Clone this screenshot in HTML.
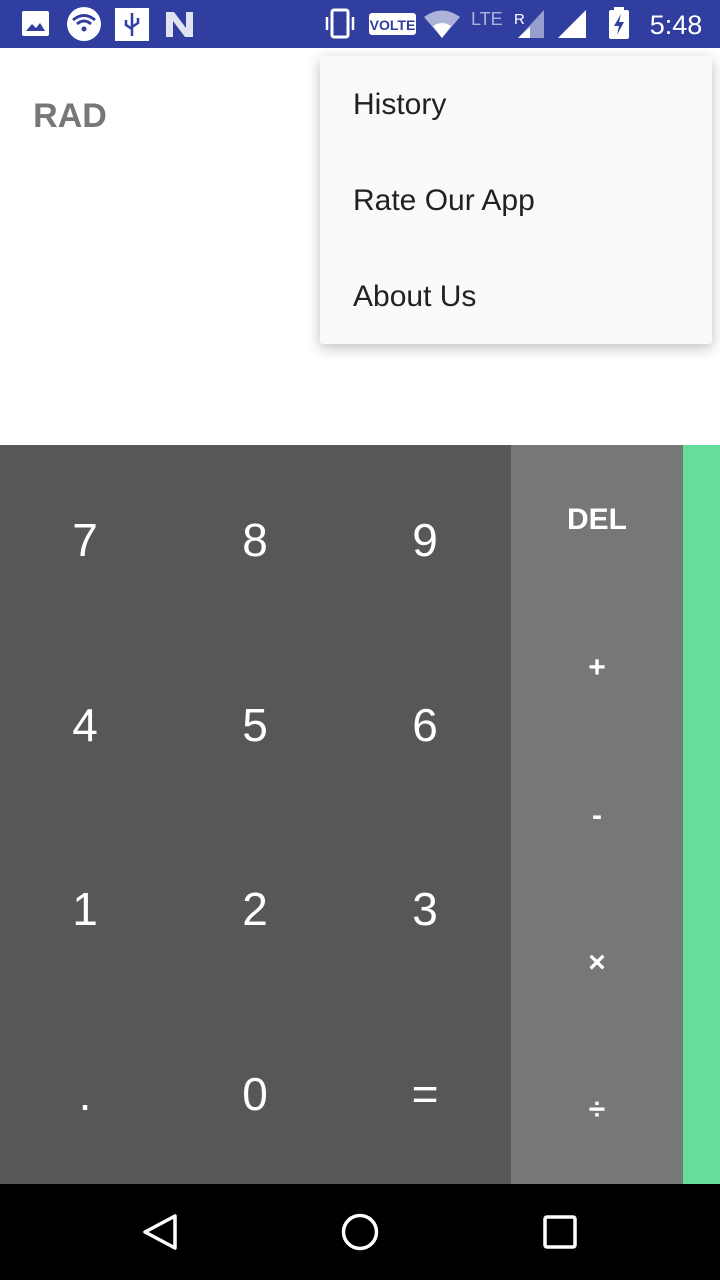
<!DOCTYPE html>
<html><head><meta charset="utf-8"><style>
*{margin:0;padding:0;box-sizing:border-box}
body{width:720px;height:1280px;position:relative;overflow:hidden;background:#fff;font-family:"Liberation Sans",sans-serif}
.sb{position:absolute;left:0;top:0;width:720px;height:48px;background:#303F9F;color:#fff}
.t{position:absolute;transform:translate(-50%,-50%);white-space:nowrap;line-height:1}
.menu{position:absolute;left:320px;top:56px;width:392px;height:288px;background:#FAFAFA;border-radius:3px;box-shadow:0 4px 14px rgba(0,0,0,.25)}
.mi{position:absolute;left:33px;font-size:30px;color:#212121;transform:translateY(-50%);line-height:1}
.pad{position:absolute;left:0;top:445px;width:511px;height:739px;background:#575757}
.ops{position:absolute;left:511px;top:445px;width:172px;height:739px;background:#777}
.gr{position:absolute;left:683px;top:445px;width:37px;height:739px;background:#66DD99}
.d{font-size:46px;color:#fff}
.o{font-size:30px;color:#fff;font-weight:bold}
.nav{position:absolute;left:0;top:1184px;width:720px;height:96px;background:#000}
</style></head><body>
<div class="sb">
<svg width="720" height="48" style="position:absolute;left:0;top:0">
<rect x="22" y="11" width="27" height="25" rx="2" fill="#fff"/><path d="M26 31 L32 24 L36 28 L40 23 L45 31Z" fill="#303F9F"/>
<circle cx="84" cy="24" r="17" fill="#fff"/><path d="M73 20 Q84 11 95 20 M77 24 Q84 18 91 24" stroke="#303F9F" stroke-width="3" fill="none"/><circle cx="84" cy="29" r="2.5" fill="#303F9F"/>
<rect x="115" y="8" width="34" height="33" fill="#fff"/><path d="M132 13 V36 M126 20 V25 L132 29 M138 18 V23 L132 27" stroke="#303F9F" stroke-width="2.5" fill="none"/>
<path d="M166 12 H174 L186 28 V12 H193 V37 H185 L173 21 V37 H166Z" fill="#fff" opacity=".85"/>
<rect x="332" y="10" width="16" height="27" rx="2" stroke="#fff" stroke-width="3" fill="none"/><path d="M327 17 V30 M353 17 V30" stroke="#fff" stroke-width="2.5"/>
<rect x="369" y="13" width="47" height="22" rx="3" fill="#fff"/><text x="392.5" y="30" font-size="14" font-weight="bold" fill="#303F9F" text-anchor="middle" font-family="Liberation Sans">VOLTE</text>
<path d="M424 17 Q442 4 460 17 L442 38Z" fill="#fff" opacity=".6"/><path d="M433 26 Q442 20 451 26 L442 38Z" fill="#fff"/>
<text x="471" y="25" font-size="18" fill="#fff" opacity=".6" font-family="Liberation Sans">LTE</text>
<text x="514" y="24" font-size="15" fill="#fff" font-family="Liberation Sans">R</text>
<path d="M544 10 V38 H518Z" fill="#fff" opacity=".5"/><path d="M530 27 V38 H518Z" fill="#fff"/>
<path d="M586 10 V38 H558Z" fill="#fff"/>
<rect x="609" y="10" width="20" height="29" rx="2" fill="#fff"/><rect x="614" y="7" width="10" height="4" fill="#fff"/><path d="M621 14 L614 26 H619 L617 35 L624 22 H619Z" fill="#303F9F"/>
<text x="676" y="34" font-size="27" fill="#fff" text-anchor="middle" font-family="Liberation Sans">5:48</text>
</svg>
</div>
<div class="t" style="left:70px;top:116px;font-size:34px;color:#777;font-weight:bold">RAD</div>
<div class="menu">
<div class="mi" style="top:49px">History</div>
<div class="mi" style="top:145px">Rate Our App</div>
<div class="mi" style="top:241px">About Us</div>
</div>
<div class="pad"></div><div class="ops"></div><div class="gr"></div>
<div class="t d" style="left:85px;top:540px">7</div><div class="t d" style="left:255px;top:540px">8</div><div class="t d" style="left:425px;top:540px">9</div>
<div class="t d" style="left:85px;top:725px">4</div><div class="t d" style="left:255px;top:725px">5</div><div class="t d" style="left:425px;top:725px">6</div>
<div class="t d" style="left:85px;top:909px">1</div><div class="t d" style="left:255px;top:909px">2</div><div class="t d" style="left:425px;top:909px">3</div>
<div class="t d" style="left:85px;top:1094px">.</div><div class="t d" style="left:255px;top:1094px">0</div><div class="t d" style="left:425px;top:1094px">=</div>
<div class="t o" style="left:597px;top:520px">DEL</div>
<div class="t o" style="left:597px;top:668px">+</div>
<div class="t o" style="left:597px;top:816px">-</div>
<div class="t o" style="left:597px;top:963px">×</div>
<div class="t o" style="left:597px;top:1110px">÷</div>
<div class="nav">
<svg width="720" height="96">
<path d="M175 32 L145 48 L175 64Z" stroke="#fff" stroke-width="3.5" fill="none" stroke-linejoin="round"/>
<circle cx="360" cy="48" r="16.5" stroke="#fff" stroke-width="3.5" fill="none"/>
<rect x="545" y="33" width="30" height="30" rx="2" stroke="#fff" stroke-width="3.5" fill="none"/>
</svg>
</div>
</body></html>
